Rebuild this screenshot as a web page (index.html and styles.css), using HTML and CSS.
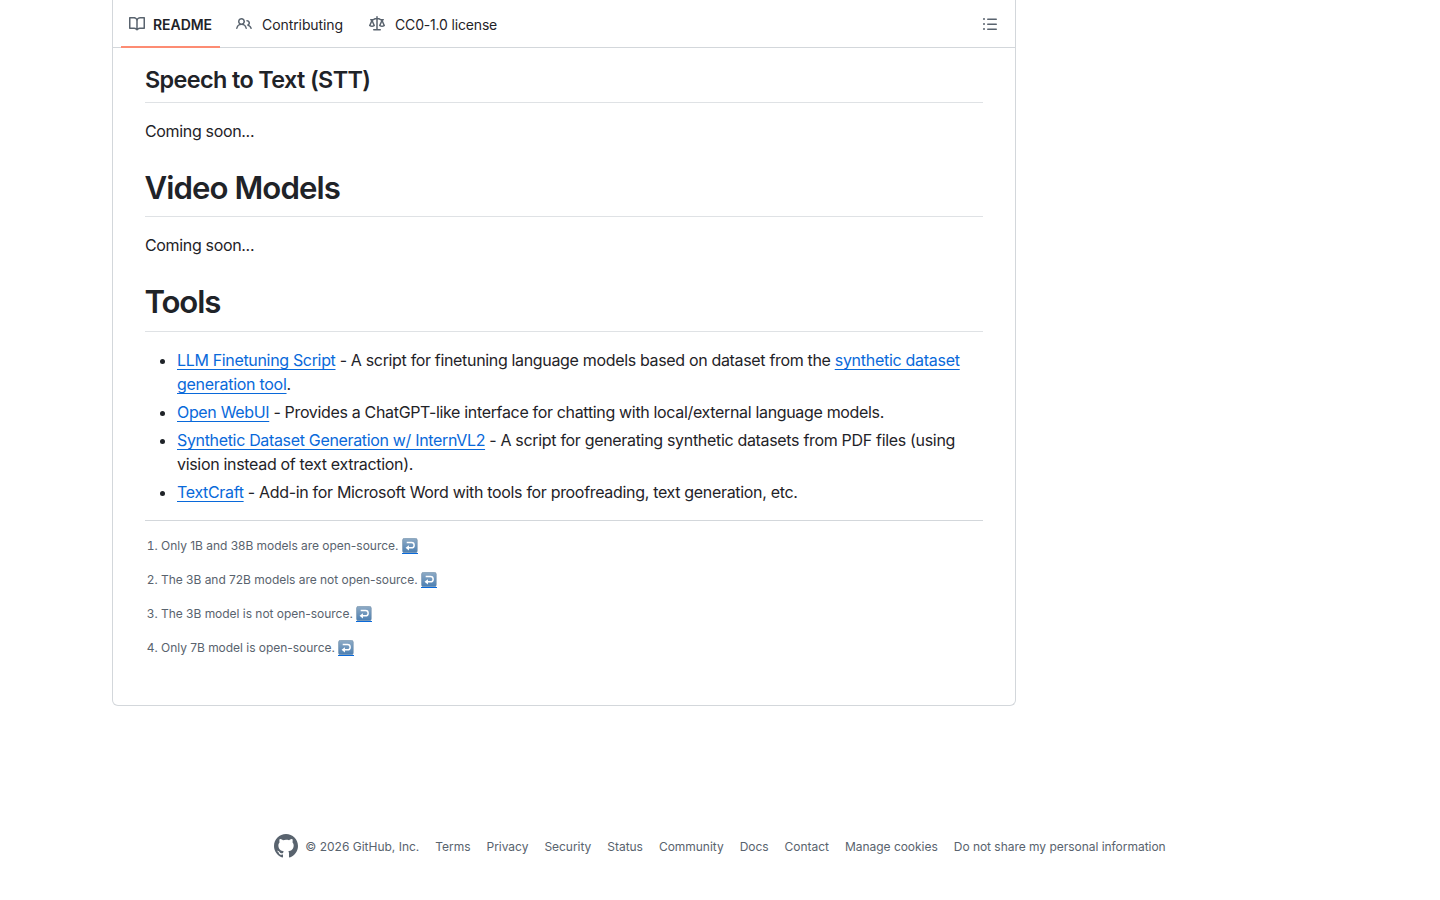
FILE: index.html
```html
<!DOCTYPE html>
<html lang="en">
<head>
<meta charset="utf-8">
<title>README</title>
<link rel="stylesheet" href="styles.css">
</head>
<body>
<svg width="0" height="0" class="defs" aria-hidden="true">
  <defs>
    <linearGradient id="key" x1="0" y1="0" x2="0" y2="1"><stop offset="0" stop-color="#8fabc5"/><stop offset="1" stop-color="#4c7fb2"/></linearGradient>
    <symbol id="back" viewBox="0 0 16 16">
      <rect x="0.3" y="0.3" width="15.2" height="15" rx="2" fill="url(#key)" stroke="#7590aa" stroke-width=".6"/>
      <path d="M4.6 4.7h5a2.7 2.7 0 0 1 0 5.4H6.2" fill="none" stroke="#fff" stroke-width="1.5"/>
      <path d="M6.9 7.4v5.4L3.4 10.1z" fill="#fff"/>
    </symbol>
  </defs>
</svg>
<main class="readme">
  <nav class="tabs">
    <a class="tab tab-active"><svg class="icon" viewBox="0 0 16 16"><path d="M0 1.75A.75.75 0 0 1 .75 1h4.253c1.227 0 2.317.59 3 1.501A3.743 3.743 0 0 1 11.006 1h4.245a.75.75 0 0 1 .75.75v10.5a.75.75 0 0 1-.75.75h-4.507a2.25 2.25 0 0 0-1.591.659l-.622.621a.75.75 0 0 1-1.06 0l-.622-.621A2.25 2.25 0 0 0 5.258 13H.75a.75.75 0 0 1-.75-.75Zm7.251 10.324.004-5.073-.002-2.253A2.25 2.25 0 0 0 5.003 2.5H1.5v9h3.757a3.75 3.75 0 0 1 1.994.574ZM8.755 4.75l-.004 7.322a3.752 3.752 0 0 1 1.992-.572H14.5v-9h-3.495a2.25 2.25 0 0 0-2.25 2.25Z"/></svg><span>README</span></a>
    <a class="tab tab-people"><svg class="icon" viewBox="0 0 16 16"><path d="M2 5.5a3.5 3.5 0 1 1 5.898 2.549 5.508 5.508 0 0 1 3.034 4.084.75.75 0 1 1-1.482.235 4 4 0 0 0-7.9 0 .75.75 0 0 1-1.482-.236A5.507 5.507 0 0 1 3.102 8.05 3.493 3.493 0 0 1 2 5.5ZM11 4a3.001 3.001 0 0 1 2.22 5.018 5.01 5.01 0 0 1 2.56 3.012.749.749 0 0 1-.885.954.752.752 0 0 1-.549-.514 3.507 3.507 0 0 0-2.522-2.372.75.75 0 0 1-.574-.73v-.352a.75.75 0 0 1 .416-.672A1.5 1.5 0 0 0 11 5.5.75.75 0 0 1 11 4Zm-5.5-.5a2 2 0 1 0-.001 3.999A2 2 0 0 0 5.5 3.5Z"/></svg><span>Contributing</span></a>
    <a class="tab tab-law"><svg class="icon" viewBox="0 0 16 16"><path d="M8.75.75V2h.985c.304 0 .603.08.867.231l1.29.736c.038.022.08.033.124.033h2.234a.75.75 0 0 1 0 1.5h-.427l2.111 4.692a.75.75 0 0 1-.154.838l-.53-.53.529.531-.001.002-.002.002-.006.006-.006.005-.01.01-.045.04c-.21.176-.441.327-.686.45C14.556 10.78 13.88 11 13 11a4.498 4.498 0 0 1-2.023-.454 3.544 3.544 0 0 1-.686-.45l-.045-.04-.016-.015-.006-.006-.004-.004v-.001a.75.75 0 0 1-.154-.838L12.178 4.5h-.162c-.305 0-.604-.079-.868-.231l-1.29-.736a.245.245 0 0 0-.124-.033H8.75V13h2.5a.75.75 0 0 1 0 1.5h-6.5a.75.75 0 0 1 0-1.5h2.5V3.5h-.984a.245.245 0 0 0-.124.033l-1.289.737c-.265.15-.564.23-.869.23h-.162l2.112 4.692a.75.75 0 0 1-.154.838l-.53-.53.529.531-.001.002-.002.002-.006.006-.016.015-.045.04c-.21.176-.441.327-.686.45C4.556 10.78 3.88 11 3 11a4.498 4.498 0 0 1-2.023-.454 3.544 3.544 0 0 1-.686-.45l-.045-.04-.016-.015-.006-.006-.004-.004v-.001a.75.75 0 0 1-.154-.838L2.178 4.5H1.75a.75.75 0 0 1 0-1.5h2.234a.249.249 0 0 0 .125-.033l1.288-.737c.265-.15.564-.23.869-.23h.984V.75a.75.75 0 0 1 1.5 0Zm2.945 8.477c.285.135.718.273 1.305.273s1.02-.138 1.305-.273L13 6.327Zm-10 0c.285.135.718.273 1.305.273s1.02-.138 1.305-.273L3 6.327Z"/></svg><span>CC0-1.0 license</span></a>
    <svg class="icon outline" viewBox="0 0 16 16"><path d="M5.75 2.5h8.5a.75.75 0 0 1 0 1.5h-8.5a.75.75 0 0 1 0-1.5Zm0 5h8.5a.75.75 0 0 1 0 1.5h-8.5a.75.75 0 0 1 0-1.5Zm0 5h8.5a.75.75 0 0 1 0 1.5h-8.5a.75.75 0 0 1 0-1.5ZM2 14a1 1 0 1 1 0-2 1 1 0 0 1 0 2Zm1-6a1 1 0 1 1-2 0 1 1 0 0 1 2 0ZM2 4a1 1 0 1 1 0-2 1 1 0 0 1 0 2Z"/></svg>
  </nav>
  <article class="content">
    <h2 class="h2">Speech to Text (STT)</h2>
    <p class="para">Coming soon...</p>
    <h1 class="h1">Video Models</h1>
    <p class="para">Coming soon...</p>
    <h1 class="h1 tools">Tools</h1>
    <ul class="list">
      <li><a class="link">LLM Finetuning Script</a> - A script for finetuning language models based on dataset from the <a class="link wide">synthetic dataset<br>generation tool</a>.</li>
      <li><a class="link">Open WebUI</a> - Provides a ChatGPT-like interface for chatting with local/external language models.</li>
      <li><a class="link">Synthetic Dataset Generation w/ InternVL2</a> <span class="looser">- A script for generating synthetic datasets from PDF files (using<br>vision instead of text extraction).</span></li>
      <li><a class="link">TextCraft</a> <span class="looser">- Add-in for Microsoft Word with tools for proofreading, text generation, etc.</span></li>
    </ul>
    <ol class="notes">
      <li>Only 1B and 38B models are open-source. <a class="back"><svg class="emoji"><use href="#back"/></svg></a></li>
      <li>The 3B and 72B models are not open-source. <a class="back"><svg class="emoji"><use href="#back"/></svg></a></li>
      <li>The 3B model is not open-source. <a class="back"><svg class="emoji"><use href="#back"/></svg></a></li>
      <li>Only 7B model is open-source. <a class="back"><svg class="emoji"><use href="#back"/></svg></a></li>
    </ol>
  </article>
</main>
<footer class="footer">
  <svg class="mark" viewBox="1 1 22 22"><path d="M12 1C5.923 1 1 5.923 1 12c0 4.867 3.149 8.979 7.521 10.436.55.096.756-.233.756-.522 0-.262-.013-1.128-.013-2.049-2.764.509-3.479-.674-3.699-1.292-.124-.317-.66-1.293-1.127-1.554-.385-.207-.936-.715-.014-.729.866-.014 1.485.797 1.691 1.128.99 1.663 2.571 1.196 3.204.907.096-.715.385-1.196.701-1.471-2.448-.275-5.005-1.224-5.005-5.432 0-1.196.426-2.186 1.128-2.956-.111-.275-.496-1.402.11-2.915 0 0 .921-.288 3.024 1.128a10.193 10.193 0 0 1 2.75-.371c.936 0 1.871.123 2.75.371 2.104-1.43 3.025-1.128 3.025-1.128.605 1.513.221 2.64.111 2.915.701.77 1.127 1.747 1.127 2.956 0 4.222-2.571 5.157-5.019 5.432.399.344.743 1.004.743 2.035 0 1.471-.014 2.654-.014 3.025 0 .289.206.632.756.522C19.851 20.979 23 16.854 23 12c0-6.077-4.922-11-11-11Z"/></svg>
  <span class="copy">© 2026 GitHub, Inc.</span><a>Terms</a><a>Privacy</a><a>Security</a><a>Status</a><a>Community</a><a>Docs</a><a>Contact</a><a>Manage cookies</a><a>Do not share my personal information</a>
</footer>
</body>
</html>
```

FILE: styles.css
```css
* { box-sizing: border-box; }
body {
  margin: 0;
  height: 900px;
  overflow: hidden;
  background: #fff;
  color: #1f2328;
  font: 16px/24px Inter, "Liberation Sans", sans-serif;
}
.defs { display: block; height: 0; }
.readme {
  width: 904px;
  height: 706px;
  margin-left: 112px;
  border: 1px solid #d3d7db;
  border-top: 0;
  border-radius: 0 0 6px 6px;
}
.tabs {
  display: flex;
  height: 48px;
  padding: 0 17px 0 8px;
  border-bottom: 1px solid #d3d7db;
  font-size: 14px;
}
.tab {
  display: flex;
  align-items: center;
  gap: 10px;
  height: 48px;
  padding: 2px 8px 0;
}
.tab .icon { margin-bottom: 2px; }
.tab-active { gap: 8px; padding-top: 4px; font-weight: 600; letter-spacing: -0.04px; border-bottom: 2px solid #fd8c73; }
.tab-people { margin-left: 8px; letter-spacing: -0.09px; }
.tab-law { margin-left: 10px; letter-spacing: -0.17px; }
.icon { width: 16px; height: 16px; fill: #59636e; }
.outline { margin: 16px 0 0 auto; }
.content { padding: 16.6px 32px 0; letter-spacing: -0.335px; }
.h1, .h2 { margin: 0 0 16px; font-weight: 630; border-bottom: 1px solid #dfe2e5; }
.h2 { font-size: 23.4px; line-height: 30px; padding-bottom: 7.2px; letter-spacing: -0.62px; }
.h1 { font-size: 31.2px; line-height: 40px; padding: 1px 0 8.6px; margin-top: 24px; letter-spacing: -0.93px; text-indent: -0.5px; }
.tools { letter-spacing: -1.15px; }
.para { margin: 0 0 16px; }
.list { margin: 0; padding-left: 32px; white-space: nowrap; }
.list li + li { margin-top: 4px; }
.looser { letter-spacing: -0.32px; }
.link {
  color: #0969da;
  text-decoration: underline;
  text-decoration-skip-ink: none;
  text-decoration-thickness: 1px;
  text-underline-offset: 3.2px;
}
.wide { letter-spacing: -0.28px; }
.notes {
  margin: 16px 0 0;
  padding: 16px 0 0 16px;
  border-top: 1px solid #d3d7db;
  color: #59636e;
  font-size: 12px;
  line-height: 18px;
  letter-spacing: -0.03px;
}
.notes li { height: 18px; }
.notes li + li { margin-top: 16px; }
.back { display: inline-block; width: 16px; height: 16px; border-bottom: 1px solid #0969da; vertical-align: -4px; }
.emoji { display: block; width: 16px; height: 15.5px; }
.footer {
  display: flex;
  align-items: center;
  justify-content: center;
  gap: 16px;
  margin-top: 128px;
  font-size: 12px;
  letter-spacing: -0.03px;
  color: #59636e;
}
.footer span, .footer a { padding-top: 1px; margin-bottom: -1px; }
.copy { letter-spacing: 0; }
.mark { width: 24px; height: 24px; fill: #59636e; margin-right: -9px; }
```
